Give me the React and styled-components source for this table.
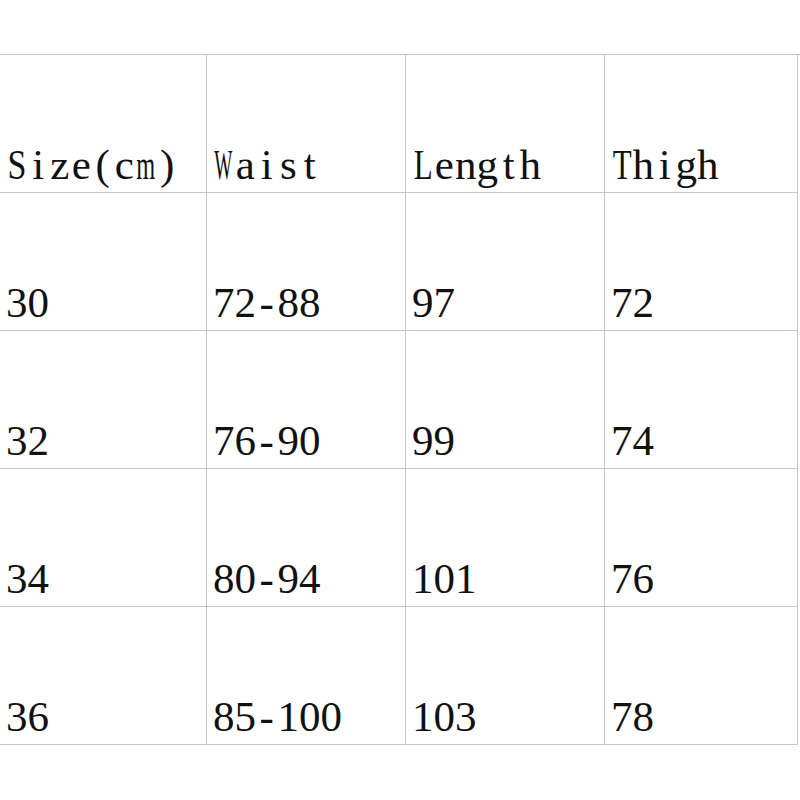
import React from 'react'
import styled, { createGlobalStyle } from 'styled-components'

const GlobalStyle = createGlobalStyle`
  body {
    margin: 0;
    background: #fff;
  }
`

const Page = styled.div`
  width: 800px;
  height: 800px;
  padding-top: 54px;
  box-sizing: border-box;
  background: #fff;
`

const Table = styled.div`
  display: grid;
  grid-template-columns: 206px 199px 199px 194px;
  grid-auto-rows: 138px;
  border-top: 1px solid #c4c6d7;
`

const Cell = styled.div`
  display: flex;
  align-items: flex-end;
  padding: 0 0 6px 6px;
  border-bottom: 1px solid #c4c6d7;
  border-left: ${p => (p.$first ? 'none' : '1px solid #c4c6d7')};
  border-right: ${p => (p.$last ? '1px solid #c4c6d7' : 'none')};
  font-family: "Liberation Serif", "DejaVu Serif", serif;
  font-size: 43px;
  line-height: 1;
  color: #111;
  white-space: nowrap;
`

// half-width cells, like a CJK system font draws latin text
const Char = styled.span`
  display: inline-flex;
  justify-content: center;
  width: 0.5em;
`

const Glyph = styled.span`
  display: inline-block;
  flex: none;
  transform-origin: center;
`

// Times advance widths for glyphs wider than half an em, with the width each keeps
const wide = {
  W: [0.944, 0.42],
  m: [0.778, 0.44],
  T: [0.611, 0.44],
  S: [0.556, 0.44],
  L: [0.611, 0.44],
}

const Mono = ({ text }) => (
  <span>
    {text.split('').map((c, i) => {
      const w = wide[c]
      return (
        <Char key={i}>
          {w ? <Glyph style={{ transform: `scaleX(${(w[1] / w[0]).toFixed(3)})` }}>{c}</Glyph> : c}
        </Char>
      )
    })}
  </span>
)

const rows = [
  ['Size(cm)', 'Waist', 'Length', 'Thigh'],
  ['30', '72-88', '97', '72'],
  ['32', '76-90', '99', '74'],
  ['34', '80-94', '101', '76'],
  ['36', '85-100', '103', '78'],
]

export default function App() {
  return (
    <Page>
      <GlobalStyle />
      <Table>
        {rows.map((row, r) =>
          row.map((v, c) => (
            <Cell key={`${r}-${c}`} $first={c === 0} $last={c === 3}>
              <Mono text={v} />
            </Cell>
          ))
        )}
      </Table>
    </Page>
  )
}
